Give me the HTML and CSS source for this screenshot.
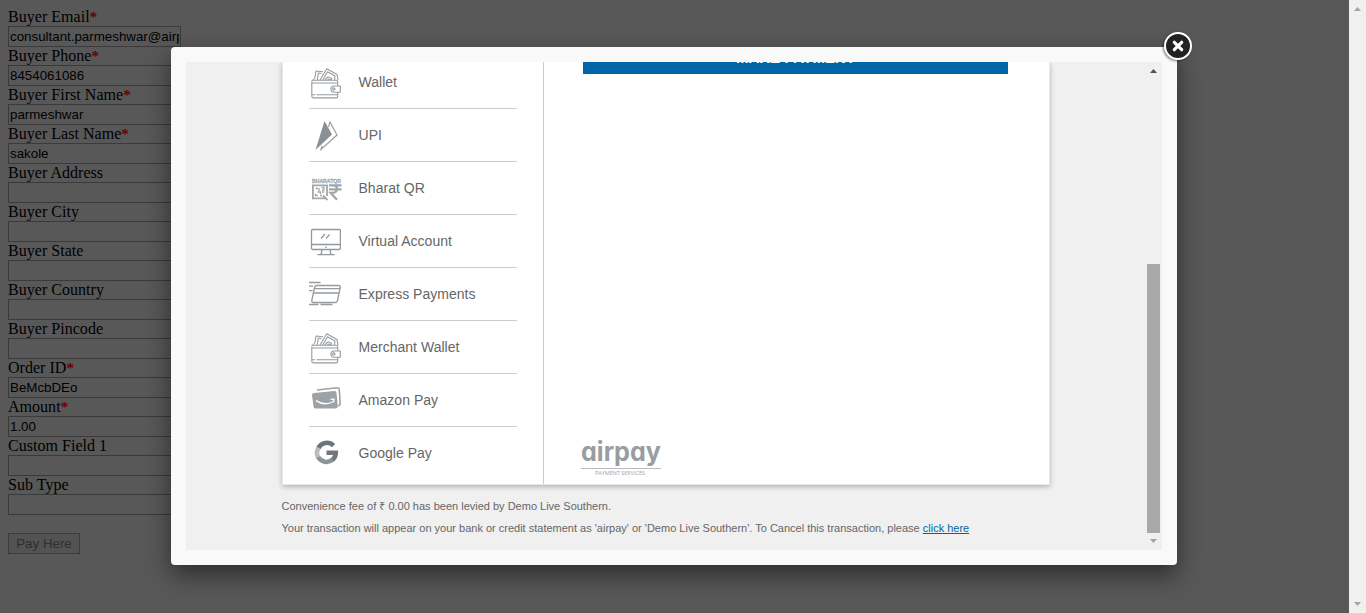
FILE: index.html
```html
<!DOCTYPE html>
<html lang="en">
<head>
<meta charset="utf-8">
<title>Payment</title>
<link rel="stylesheet" href="styles.css">
</head>
<body>
<svg class="defs" width="0" height="0">
  <symbol id="wallet" viewBox="0 0 30 31">
    <g fill="none" stroke="#969b9f" stroke-width="1.1" stroke-linejoin="round">
      <path d="M.8 14V28.200q0 1.700 1.700 1.700H25q1.700 0 1.700-1.700V24M26.700 18V13.500q0-1.300-1.300-1.300H2Q.7 12.200.7 13.500"/>
      <path d="M.8 15H26.600M.8 26.800H4M5.500 26.800H26.600"/>
      <path d="M29.300 18H23a3.100 3.100 0 0 0 0 6.200h6.300z"/><circle cx="22.800" cy="21.100" r="1.200"/>
      <path d="M1.500 12Q3.500 11.600 4 9L5 3L12 3.800M6.300 12L7.300 5L10.500 5.500M9 12L15.800.8L26 6.500L27 12M11.800 12L16.500 3.800L24 8L23.500 12M14 12q3-5 6.500-1.500L20 12M16.500 12q1.500-2 2.700 0"/>
    </g>
  </symbol>
</svg>
<div class="page">
  <form class="form">
    <label>Buyer Email<b>*</b></label><input value="consultant.parmeshwar@airpay.co.in">
    <label>Buyer Phone<b>*</b></label><input value="8454061086">
    <label>Buyer First Name<b>*</b></label><input value="parmeshwar">
    <label>Buyer Last Name<b>*</b></label><input value="sakole">
    <label>Buyer Address</label><input>
    <label>Buyer City</label><input>
    <label>Buyer State</label><input>
    <label>Buyer Country</label><input>
    <label>Buyer Pincode</label><input>
    <label>Order ID<b>*</b></label><input value="BeMcbDEo">
    <label>Amount<b>*</b></label><input value="1.00">
    <label>Custom Field 1</label><input>
    <label>Sub Type</label><input>
    <button type="button" class="pay" disabled>Pay Here</button>
  </form>
  <div class="page-scroll"><i class="up light"></i><i class="down light"></i></div>
</div>

<div class="modal">
  <div class="frame">
    <div class="content">
      <div class="card">
        <ul class="menu">
          <li><span class="icon"><svg width="30" height="31"><use href="#wallet"/></svg></span>Wallet</li>
          <li><span class="icon"><svg width="32" height="32" viewBox="0 0 32 32"><path d="M15.500 1L6.500 30L23 14.500z" fill="#899196"/><path d="M19.500 7L21 2L28 15L12 29.500L13 26" fill="none" stroke="#969da1" stroke-width="1.200"/></svg></span>UPI</li>
          <li><span class="icon"><svg width="34" height="32" viewBox="0 0 34 32">
            <text x="3" y="9.500" class="bqr" textLength="29" lengthAdjust="spacingAndGlyphs">BHARATQR</text>
            <g fill="none" stroke="#a3a7a9" stroke-width="1.800"><path d="M18 23V12.400H3.900V25.300H17M14 22.500L18.500 27"/>
            <path d="M6.500 15.500h2.500M12.500 14.500h2.500v2.500h-2M6.500 20.500v2h2.500M10 15v3M8.500 19h3v2M11 22.500h2M13 19h2" stroke-width="1.300"/>
            <path d="M20 12.300H32.500M20 16.300H32.500M20.500 12.300h3q4.500 0 4.500 3.500 0 4-4.500 4H21.500L28 26.800" stroke-width="2.200"/></g></svg></span>Bharat QR</li>
          <li><span class="icon"><svg width="32" height="32" viewBox="0 0 32 32"><g fill="none" stroke="#93989c" stroke-width="1.300"><rect x="2.500" y="3.500" width="28.900" height="20" rx="1.300"/><path d="M2.500 18.500H31.500M13 24L12 28.500M21 24L22 28.500M8.500 28.600H25.500M12 12.500L16 8M17 12.500L20.500 8.500"/><path d="M16.300 21.300h1.400" stroke-width="1.500"/></g></svg></span>Virtual Account</li>
          <li><span class="icon"><svg width="34" height="32" viewBox="0 -2 34 32"><g fill="none" stroke="#969b9f" stroke-width="1.300"><path d="M8 4.500H29.500Q31.600 4.500 31.300 6.500L28.500 19.500Q28 21.500 26.500 21.500H4.500Q2.500 21.500 2.800 19.500L5.500 6.500Q6 4.500 8 4.500zM5.500 7.700H31M4.800 12H30M0 1.500H11.500M0 5.200H4M0 9.700H3.500M0 23.500H9.500M11.500 23.500H23.500"/></g></svg></span>Express Payments</li>
          <li><span class="icon"><svg width="30" height="31"><use href="#wallet"/></svg></span>Merchant Wallet</li>
          <li><span class="icon"><svg width="32" height="32" viewBox="-1 .5 32 32"><path d="M7 5.500L27.500 3.300Q29 3.200 29.200 4.700L30.200 19Q30.200 21 28 21.200" fill="none" stroke="#9da2a6" stroke-width="1.600"/><path d="M4 8.500L24.500 6.500Q26.300 6.500 26.500 8.200L27.800 21.500Q27.800 24 25.500 24H5.500Q3.800 24 3.500 22L2 10.500Q2 8.700 4 8.500z" fill="#9da2a6"/><path d="M6 16.200Q14.500 22 23.500 17M20.500 14.900L24 14.700L23.500 18" fill="none" stroke="#fff" stroke-width="1.400"/></svg></span>Amazon Pay</li>
          <li><span class="icon"><svg width="34" height="32" viewBox="0.5 .5 34 32"><g fill="none" stroke-width="4.600"><path d="M25.100 7.100A9.600 9.600 0 0 0 9.800 9.600" stroke="#6f7578"/><path d="M10.100 9.200A9.600 9.600 0 0 0 9.900 19.300" stroke="#b9bdbf"/><path d="M9.700 18.700A9.600 9.600 0 0 0 24.300 21.100" stroke="#8c9498"/><path d="M18 14.300H27.300A9.400 9.400 0 0 1 24 21.300" stroke="#70787c"/></g></svg></span>Google Pay</li>
        </ul>
        <div class="main">
          <div class="make"><span>MAKE PAYMENT</span></div>
          <svg class="logo" width="84" height="40" viewBox="0 0 84 40"><text x="0" y="22" class="airpay" textLength="80" lengthAdjust="spacingAndGlyphs">airpay</text><path d="M0 29.500H80" stroke="#b9bbbc"/><text x="14" y="36" class="services" textLength="50" lengthAdjust="spacingAndGlyphs">PAYMENT SERVICES</text></svg>
        </div>
      </div>
      <p class="note fee">Convenience fee of ₹ 0.00 has been levied by Demo Live Southern.</p>
      <p class="note info">Your transaction will appear on your bank or credit statement as 'airpay' or 'Demo Live Southern'. To Cancel this transaction, please <a href="#">click here</a></p>
    </div>
    <div class="scroll"><i class="up"></i><span class="thumb"></span><i class="down light"></i></div>
  </div>
  <svg class="close" width="36" height="36" viewBox="0 0 36 36"><circle cx="18" cy="18" r="13" fill="#222" stroke="#fff" stroke-width="2"/><path d="M14.300 14.300L21.700 21.700M21.700 14.300L14.300 21.700" stroke="#fff" stroke-width="3.200" stroke-linecap="round"/></svg>
</div>
</body>
</html>
```
FILE: styles.css
```css
* { box-sizing: border-box; }
body { margin: 0; height: 613px; overflow: hidden; background: #585858; font-family: "Liberation Sans", Arial, sans-serif; }
.defs { position: absolute; }
.page { display: flex; justify-content: space-between; height: 613px; }
.form { display: flex; flex-direction: column; align-items: flex-start; padding: 8px; }
.form label { height: 18px; font: 16px/18px "Liberation Serif", "Times New Roman", serif; color: #000; letter-spacing: .03px; }
.form b { font-weight: 700; font-size: 15px; line-height: 0; color: #6b0000; }
.form input { width: 173px; height: 21px; margin: 0; padding: 1px; border: 1px solid #3a3a3a; background: #585858; color: #000; font: 13.333px "Liberation Sans", Arial, sans-serif; }
.pay { width: 72px; height: 21px; margin-top: 18px; padding: 0; border: 1px solid #3c3c3c; border-radius: 0; background: #535353; color: #2f2f2f; font: 13.333px "Liberation Sans", Arial, sans-serif; }
.page-scroll { display: flex; flex-direction: column; justify-content: space-between; align-items: center; width: 17px; padding: 7px 0; background: #f0f0f0; }
.up, .down { width: 7px; height: 4px; background: #505050; clip-path: polygon(50% 0, 100% 100%, 0 100%); }
.down { clip-path: polygon(0 0, 100% 0, 50% 100%); }
.light { background: #a3a3a3; }

.modal { position: absolute; left: 171px; top: 47px; width: 1006px; height: 518px; padding: 15px; border-radius: 4px; background: #f9f9f9; box-shadow: 0 10px 25px rgba(0, 0, 0, .5); }
.frame { display: flex; justify-content: space-between; height: 488px; overflow: hidden; background: #f0f0f0; }
.content { padding-left: 96px; }
.card { display: flex; width: 768px; height: 423px; background: #fff; border: 1px solid #e8e8e8; border-top: 0; box-shadow: 0 2px 5px rgba(0, 0, 0, .25); }
.menu { width: 261px; margin: 0; padding: 0 26px; border-right: 1px solid #c9cdcf; list-style: none; }
.menu li { display: flex; align-items: center; height: 53px; padding-bottom: 1px; border-bottom: 1px solid #c8cfd2; color: #666; font-size: 14px; letter-spacing: .02px; }
.menu li:first-child { margin-top: -6px; }
.menu li:last-child { border: 0; }
.icon { display: flex; width: 49.5px; padding-top: 3px; }
.icon svg[width="30"] { margin: 1px 0 0 2px; }
.bqr { font: bold 5.5px "Liberation Sans", Arial, sans-serif; fill: #a3a7a9; stroke: #a3a7a9; stroke-width: .3px; }
.main { display: flex; flex-direction: column; justify-content: space-between; align-items: flex-start; padding: 0 0 5px 37px; }
.make { width: 425px; height: 12px; margin-left: 2px; overflow: hidden; background: #0066a8; color: #fff; font-size: 15px; font-weight: 700; line-height: 16px; text-align: center; }
.make span { display: block; margin-top: -12px; }
.logo { overflow: visible; }
.airpay { font: bold 26px Inter, sans-serif; font-feature-settings: "cv11"; fill: #999d9f; }
.services { font: 5.5px "Open Sans", sans-serif; fill: #a0a3a5; }
.note { margin: 0 0 0 -.5px; color: #666; font-size: 11px; line-height: 22px; white-space: nowrap; }
.fee { padding-top: 10px; }
.note a { color: #0066a0; }
.scroll { display: flex; flex-direction: column; align-items: center; width: 17px; padding-top: 7px; background: #f0f0f0; }
.thumb { width: 13px; height: 269px; margin-top: 191px; background: #a8a8a8; }
.scroll .down { margin-top: 6px; }
.close { position: absolute; left: 989px; top: -19px; filter: drop-shadow(-1px 1px 1px rgba(0, 0, 0, .5)); }
```
